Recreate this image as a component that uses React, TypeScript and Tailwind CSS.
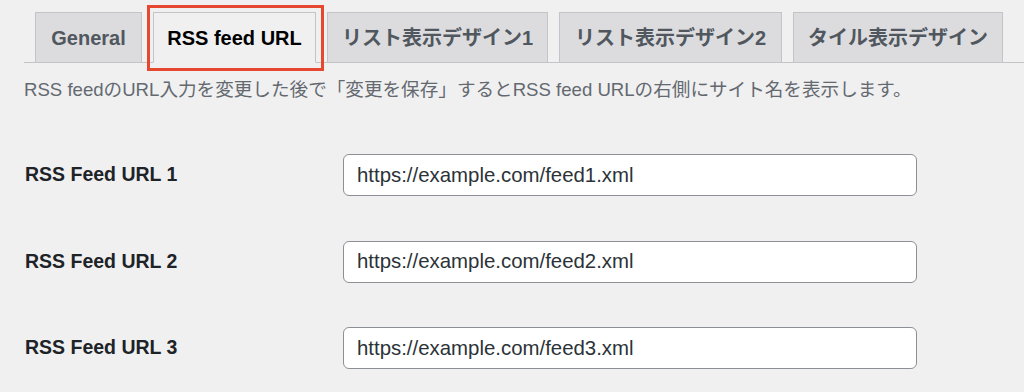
const font = { fontFamily: '"Liberation Sans", "Noto Sans CJK JP", sans-serif' };

const tabs = [
  { label: 'General', width: 'w-[107px]' },
  { label: 'RSS feed URL', width: 'w-[163px]', active: true },
  { label: 'リスト表示デザイン1', width: 'w-[221px]' },
  { label: 'リスト表示デザイン2', width: 'w-[223px]' },
  { label: 'タイル表示デザイン', width: 'w-[210px]' },
];

const feeds = [
  'https://example.com/feed1.xml',
  'https://example.com/feed2.xml',
  'https://example.com/feed3.xml',
];

export default function App() {
  return (
    <div className="w-[1024px] h-[392px] overflow-hidden bg-[#f0f0f1] pl-[24px] pt-[12px]" style={font}>
      <nav className="flex gap-[11px] pl-[11px] border-b border-[#c3c4c7]">
        {tabs.map((t) => (
          <div key={t.label} className="relative -mb-px">
            <div
              className={`${t.width} h-[51px] flex items-center justify-center border text-[20px] font-bold whitespace-nowrap ${
                t.active
                  ? 'bg-[#f0f0f1] border-[#c3c4c7] border-b-[#f0f0f1] text-black'
                  : 'bg-[#dcdcde] border-[#c3c4c7] text-[#50575e]'
              }`}
            >
              {t.label}
            </div>
            {t.active && (
              <div className="absolute left-[-6px] top-[-7px] w-[177px] h-[66px] border-[3px] border-[#e5482f]" />
            )}
          </div>
        ))}
      </nav>

      <p className="mt-[14px] text-[18.6px] leading-[26px] text-[#646970] whitespace-nowrap">
        RSS feedのURL入力を変更した後で「変更を保存」するとRSS feed URLの右側にサイト名を表示します。
      </p>

      <div className="mt-[28.75px]">
        {feeds.map((url, i) => (
          <div key={url} className="h-[86.5px] flex items-center">
            <div className="w-[319px] pl-px text-[19.5px] font-bold text-[#1d2327]">
              RSS Feed URL {i + 1}
            </div>
            <input
              readOnly
              value={url}
              className="w-[574px] h-[42px] bg-white border border-[#8c8f94] rounded-[6px] px-[13px] text-[20.4px] text-[#2c3338] outline-none"
              style={font}
            />
          </div>
        ))}
      </div>
    </div>
  );
}
